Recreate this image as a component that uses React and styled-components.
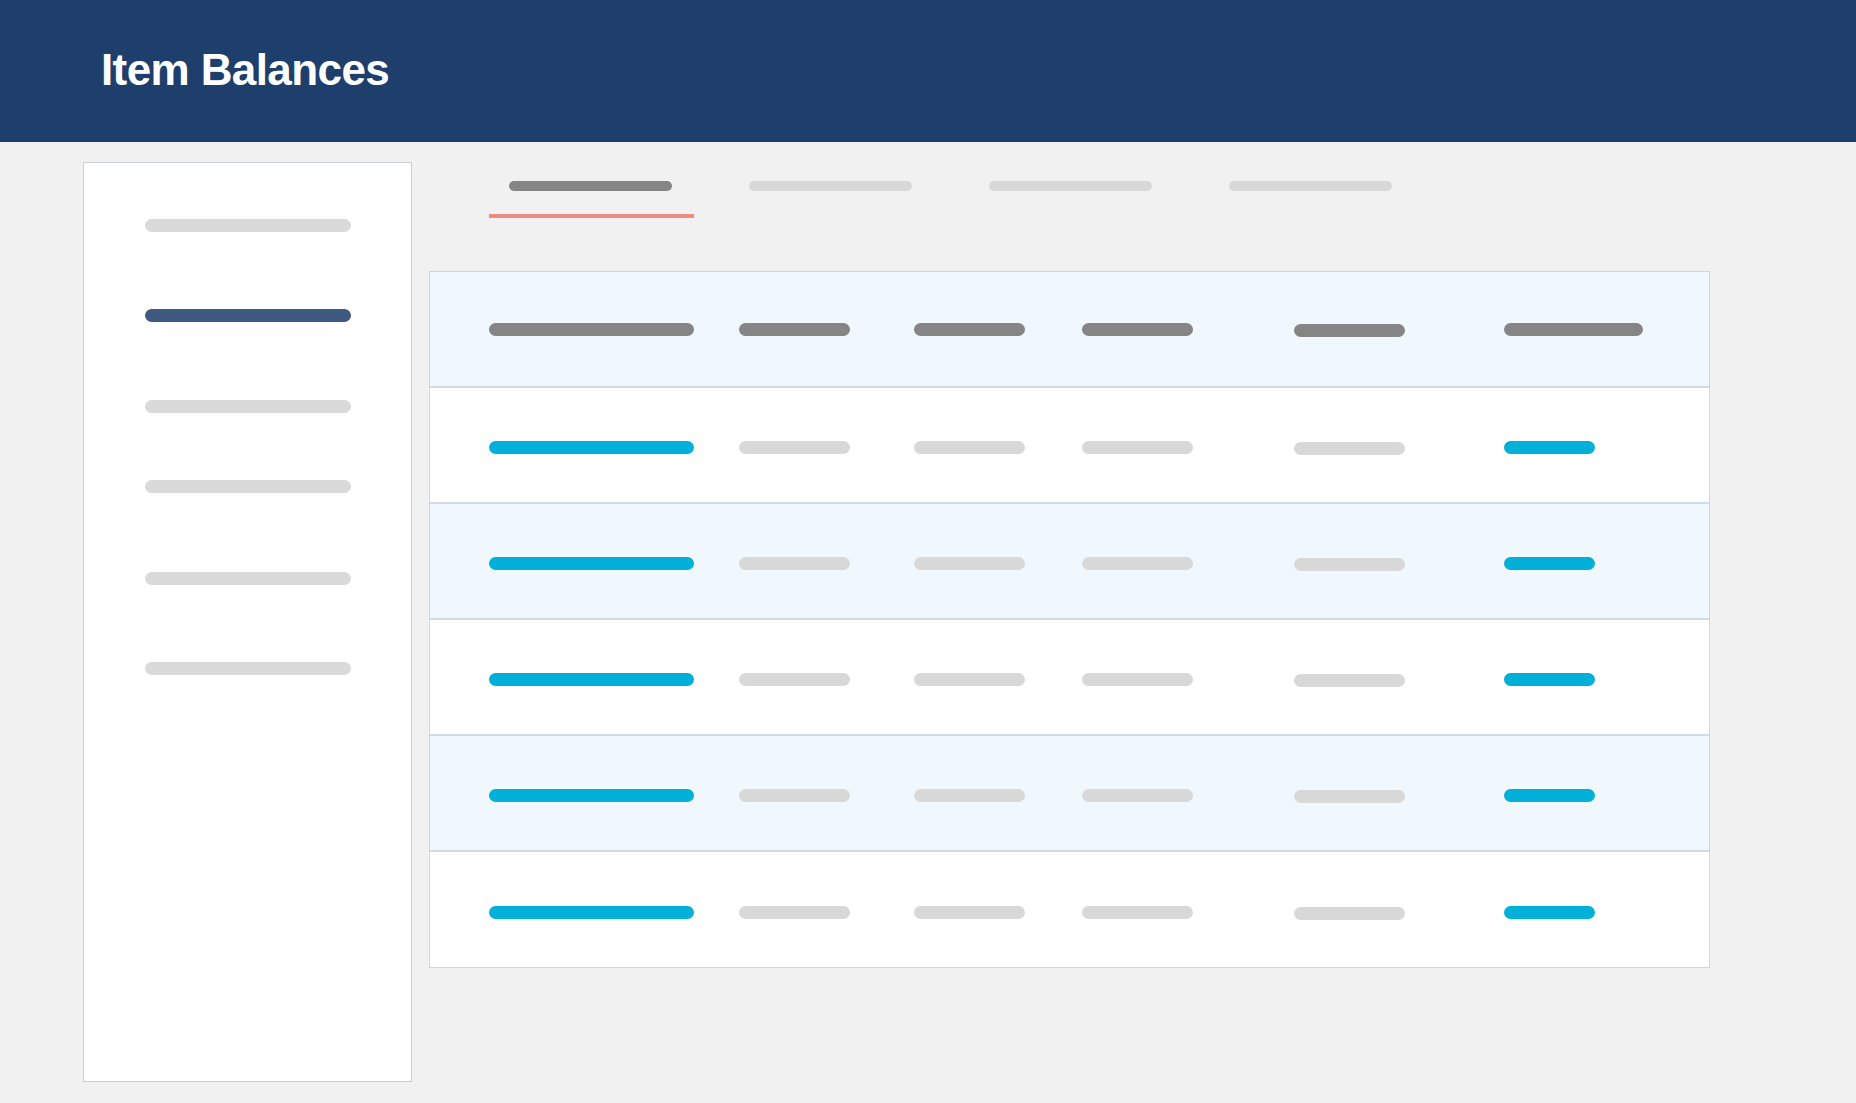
import React from 'react';
import styled, {createGlobalStyle} from 'styled-components';

const GlobalStyle = createGlobalStyle`
  html, body {
    margin: 0;
    padding: 0;
    background: #f1f1f1;
    font-family: "Liberation Sans", Arial, sans-serif;
  }
  * {
    box-sizing: border-box;
  }
`

const navItems = [
  {gap: 0, active: false},
  {gap: 77, active: true},
  {gap: 78, active: false},
  {gap: 67, active: false},
  {gap: 79, active: false},
  {gap: 77, active: false},
];

const tabs = [true, false, false, false];

const columns = [
  {head: 205, cell: 205, accent: true},
  {head: 111, cell: 111},
  {head: 111, cell: 111},
  {head: 111, cell: 111},
  {head: 111, cell: 111, nudge: 1},
  {head: 139, cell: 91, accent: true},
];

const rows = [0, 1, 2, 3, 4];

function App() {
  return (
    <Page>
      <GlobalStyle />
      <Header>
        <Title>Item Balances</Title>
      </Header>
      <Main>
        <Sidebar>
          {navItems.map((item, i) => (
            <NavBar key={i} $active={item.active} style={{marginTop: item.gap}} />
          ))}
        </Sidebar>
        <Content>
          <Tabs>
            {tabs.map((active, i) => (
              <Tab key={i} $active={active}>
                <TabBar $active={active} />
              </Tab>
            ))}
          </Tabs>
          <Table>
            <Row $tinted>
              {columns.map((col, i) => (
                <Cell key={i}>
                  <Bar $color="#858585" $width={col.head} $nudge={col.nudge} />
                </Cell>
              ))}
            </Row>
            {rows.map((r) => (
              <Row key={r} $tinted={r % 2 === 1} $body>
                {columns.map((col, i) => (
                  <Cell key={i}>
                    <Bar
                      $color={col.accent ? '#00b0d9' : '#d8d8d8'}
                      $width={col.cell}
                      $nudge={col.nudge}
                    />
                  </Cell>
                ))}
              </Row>
            ))}
          </Table>
        </Content>
      </Main>
    </Page>
  );
}

export default App;

const Page = styled.div`
  min-height: 100vh;
  background: #f1f1f1;
`

const Header = styled.header`
  height: 142px;
  background: #1e3f6c;
  display: flex;
  align-items: center;
  padding-left: 101px;
  padding-bottom: 2px;
`

const Title = styled.h1`
  margin: 0;
  color: #ffffff;
  font-size: 44px;
  font-weight: 700;
  letter-spacing: -0.6px;
`

const Main = styled.div`
  display: flex;
  align-items: flex-start;
  gap: 17px;
  padding: 20px 0 21px 83px;
`

const Sidebar = styled.nav`
  width: 329px;
  height: 920px;
  background: #ffffff;
  border: 1px solid #c9ced3;
  display: flex;
  flex-direction: column;
  padding: 56px 0 0 61px;
`

const NavBar = styled.div`
  width: 206px;
  height: 13px;
  border-radius: 7px;
  background: ${p => (p.$active ? '#3e5a80' : '#dadada')};
`

const Content = styled.div`
  display: flex;
  flex-direction: column;
`

const Tabs = styled.div`
  display: flex;
  gap: 35px;
  padding-left: 60px;
  margin-bottom: 53px;
`

const Tab = styled.div`
  width: 205px;
  padding: 19px 20px 0;
  height: 56px;
  border-bottom: 4px solid ${p => (p.$active ? '#f08a84' : 'transparent')};
`

const TabBar = styled.div`
  width: 163px;
  height: 10px;
  border-radius: 5px;
  background: ${p => (p.$active ? '#858585' : '#d8d8d8')};
`

const Table = styled.div`
  width: 1281px;
  border: 1px solid #d0d6dc;
  border-bottom: none;
`

const Row = styled.div`
  height: 116px;
  display: grid;
  grid-template-columns: 250px 175px 168px 212px 210px 1fr;
  align-items: center;
  padding-left: 59px;
  padding-top: ${p => (p.$body ? 5 : 0)}px;
  background: ${p => (p.$tinted ? '#f1f8fd' : '#ffffff')};
  border-bottom: 2px solid #d3dbe2;
  &:last-child {
    border-bottom: 1px solid #d0d6dc;
  }
`

const Cell = styled.div`
  display: flex;
  align-items: center;
`

const Bar = styled.div`
  width: ${p => p.$width}px;
  height: 13px;
  border-radius: 7px;
  background: ${p => p.$color};
  margin-top: ${p => (p.$nudge ? 2 : 0)}px;
`
